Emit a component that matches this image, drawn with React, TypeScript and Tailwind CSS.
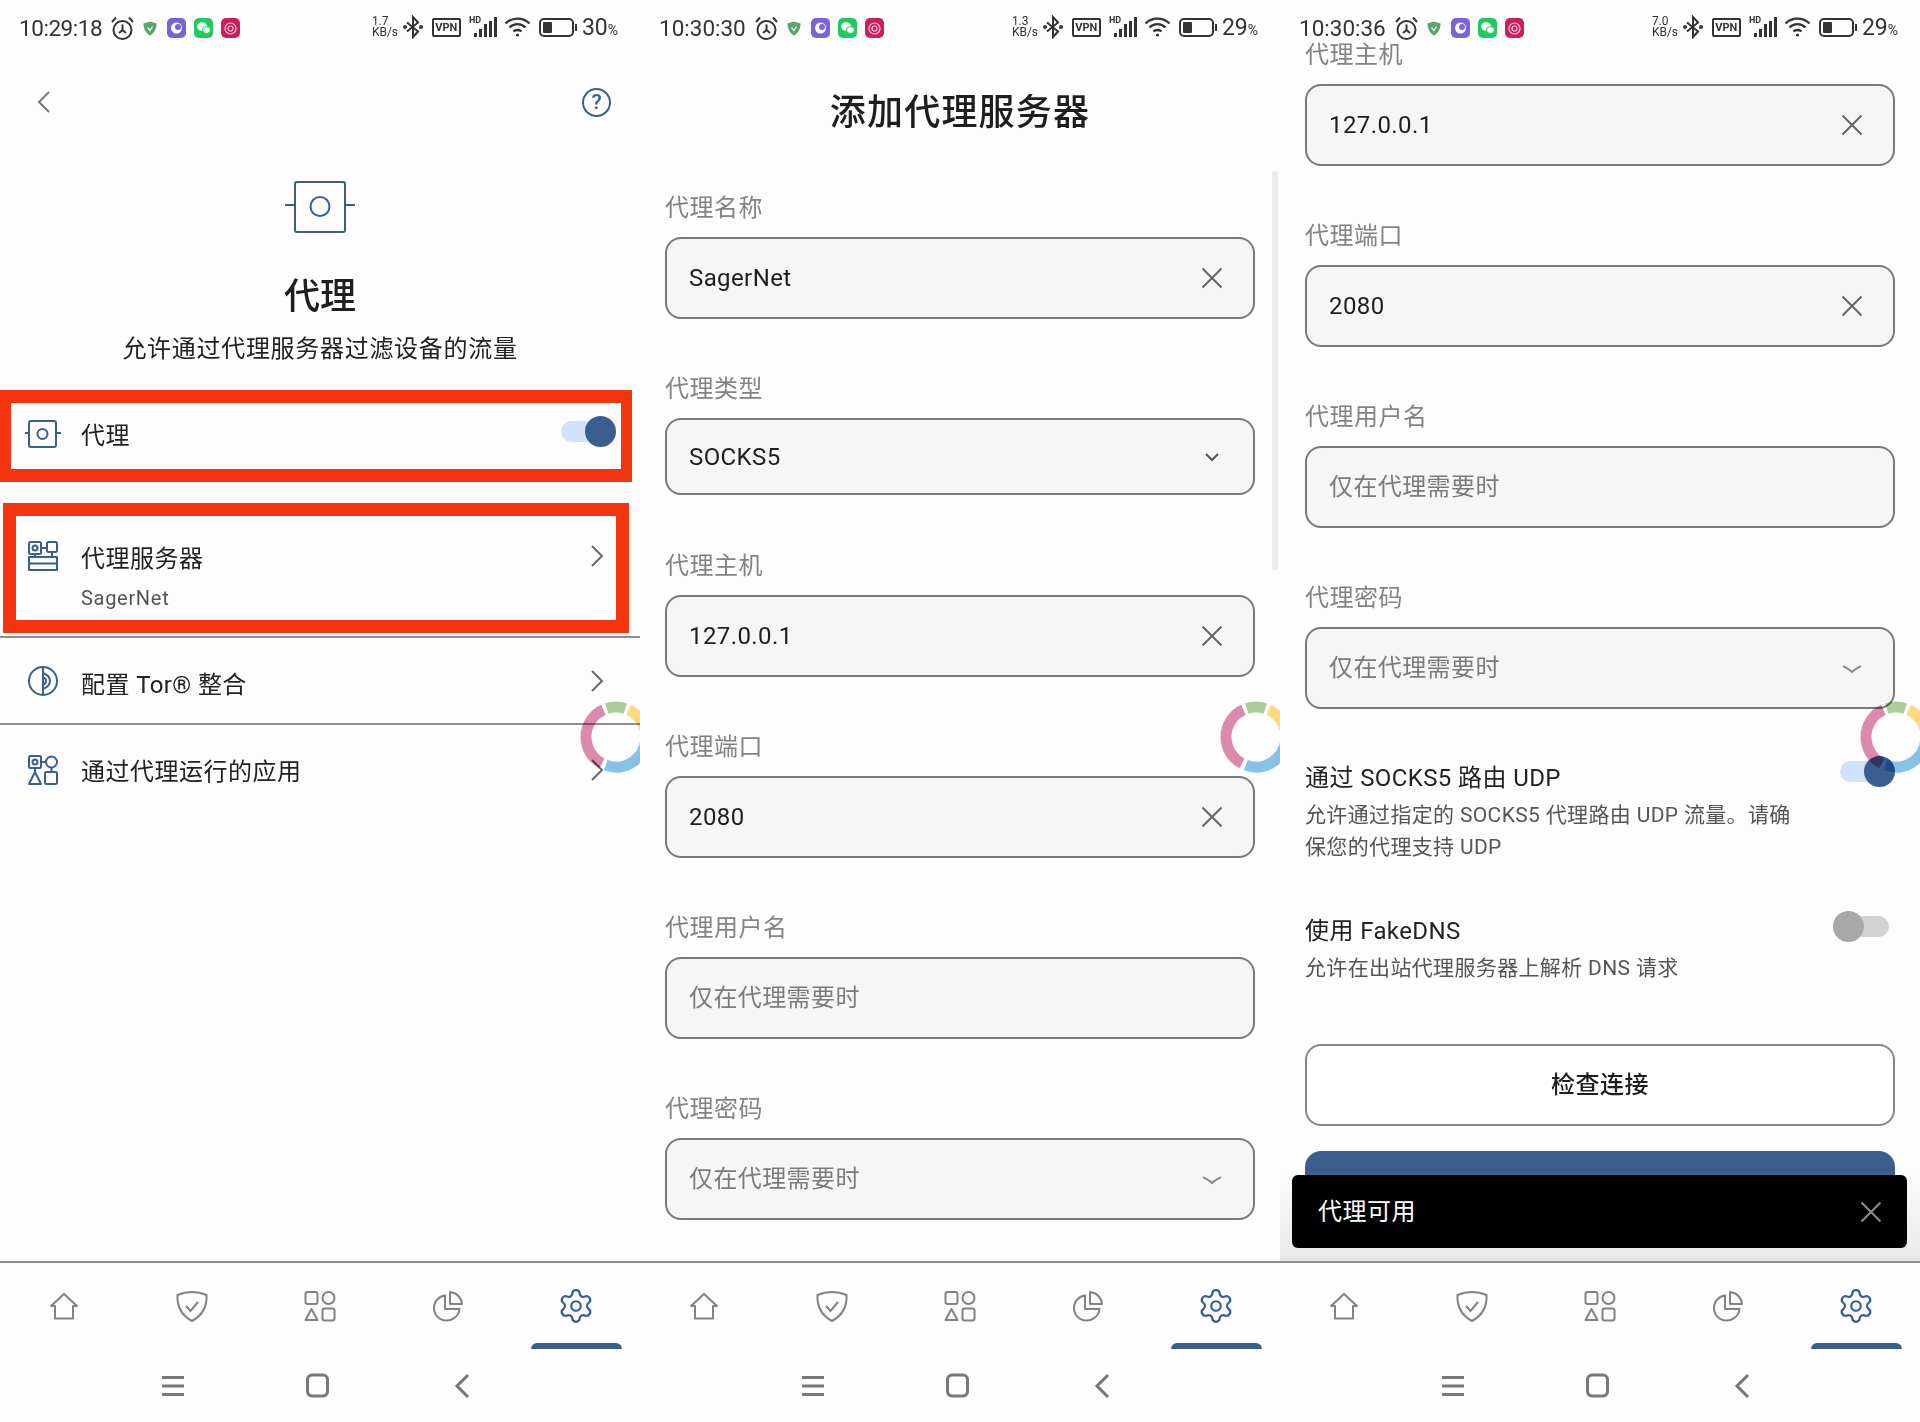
import { Settings } from 'lucide-react';

const BLUE = '#3a5f8f';

function arc(start: number, end: number, r = 30, c = 36) {
  const pt = (deg: number) => {
    const a = ((deg - 90) * Math.PI) / 180;
    return `${(c + r * Math.cos(a)).toFixed(2)} ${(c + r * Math.sin(a)).toFixed(2)}`;
  };
  return `M${pt(start)} A${r} ${r} 0 ${end - start > 180 ? 1 : 0} 1 ${pt(end)}`;
}

function Ring() {
  return (
    <svg className="absolute left-[580px] top-[701px] mix-blend-multiply" width="72" height="72" viewBox="0 0 72 72" fill="none" strokeWidth="11">
      <path d={arc(208, 335)} stroke="#e08aad" />
      <path d={arc(342, 378)} stroke="#aed09a" />
      <path d={arc(25, 85)} stroke="#fddc85" />
      <path d={arc(95, 200)} stroke="#87c4e8" />
    </svg>
  );
}

function StatusBar({ time, speed, percent, tight }: { time: string; speed: string; percent: string; tight?: boolean }) {
  return (
    <div className="flex h-[44px] items-end justify-between pb-[1px] pl-[19px] pr-[22px] text-[#333]">
      <div className="flex items-center">
        <span className={`text-[22.5px] leading-[30px] ${tight ? 'tracking-[-0.45px]' : ''}`}>{time}</span>
        <svg className="ml-[7px]" width="27" height="27" viewBox="0 0 27 27" fill="none" stroke="#333" strokeWidth="2">
          <circle cx="13.500" cy="15" r="9" />
          <path d="M13.500 9.500V15L10 18M13.500 15 17 18M3 7 7 2.500M24 7 20 2.500" />
        </svg>
        <svg className="ml-[7px]" width="14" height="15" viewBox="0 0 14 15">
          <path d="M7 0.5 13.5 2.5C13.5 8 11 12.5 7 14.5 3 12.5 .5 8 .5 2.5Z" fill="#58a66c" />
          <path d="M4.5 6.5 7 9.5 9.5 5.5" stroke="#fff" strokeWidth="1.3" fill="none" />
        </svg>
        <svg className="ml-[10px]" width="19" height="20" viewBox="0 0 19 20">
          <rect width="19" height="20" rx="5" fill="#7a63d6" />
          <circle cx="9.5" cy="10" r="5.5" fill="#fff" />
          <circle cx="11" cy="9" r="3" fill="#7a63d6" />
        </svg>
        <svg className="ml-[8px]" width="19" height="20" viewBox="0 0 19 20">
          <rect width="19" height="20" rx="5" fill="#1fc95f" />
          <ellipse cx="8" cy="8.500" rx="5" ry="4.2" fill="#fff" />
          <ellipse cx="12.5" cy="12" rx="4" ry="3.4" fill="#fff" stroke="#1fc95f" />
        </svg>
        <svg className="ml-[8px]" width="19" height="20" viewBox="0 0 19 20" fill="none">
          <rect width="19" height="20" rx="5" fill="#c8205f" />
          <circle cx="9.5" cy="10.500" r="5.5" stroke="#f5c6d8" strokeWidth="1.2" />
          <circle cx="9.5" cy="10.500" r="2.5" stroke="#f5c6d8" strokeWidth="1.2" />
        </svg>
      </div>
      <div className="flex items-center">
        <div className="flex w-[28px] flex-col text-[12px] leading-[11px]">
          <span>{speed}</span>
          <span>KB/s</span>
        </div>
        <svg className="ml-[3px]" width="20" height="24" viewBox="0 0 20 24" fill="none" stroke="#333" strokeWidth="2">
          <path d="M4 7.5 15 16.5 10 22V2L15 7.5 4 16.5" />
          <circle cx="2" cy="12" r="1" fill="#333" />
          <circle cx="18" cy="12" r="1" fill="#333" />
        </svg>
        <span className="ml-[9px] flex h-[19px] w-[29px] items-center justify-center rounded-[2px] border-2 border-[#333] text-[11px] font-bold leading-none">VPN</span>
        <div className="relative ml-[8px] h-[20px] w-[28px]">
          <span className="absolute left-0 top-[-2px] text-[9px] font-bold leading-[10px]">HD</span>
          <div className="absolute bottom-0 right-0 flex items-end gap-[2px]">
            <i className="h-[4px] w-[3px] bg-[#333]" />
            <i className="h-[8px] w-[3px] bg-[#333]" />
            <i className="h-[13px] w-[3px] bg-[#333]" />
            <i className="h-[16px] w-[3px] bg-[#333]" />
            <i className="h-[20px] w-[3px] bg-[#333]" />
          </div>
        </div>
        <svg className="ml-[7px]" width="27" height="22" viewBox="0 0 27 22" fill="none" stroke="#333" strokeWidth="2.4">
          <path d="M1.5 7.5C8 1 19 1 25.5 7.5M5.5 11.5C10 7 17 7 21.5 11.5M9.5 15.5C11.5 13.5 15.5 13.5 17.5 15.5" />
          <circle cx="13.5" cy="19" r="1.6" fill="#333" stroke="none" />
        </svg>
        <div className="ml-[8px] flex items-center">
          <div className="h-[19px] w-[35px] rounded-[5px] border-2 border-[#333] p-[2px]">
            <div className="h-full w-[9px] rounded-[1px] bg-[#333]" />
          </div>
          <i className="ml-[1px] h-[7px] w-[2px] bg-[#333]" />
        </div>
        <span className="ml-[5px] mt-[4px] flex items-baseline text-[23px] leading-[26px]">
          {percent}
          <span className="text-[14px]">%</span>
        </span>
      </div>
    </div>
  );
}

function BottomNav() {
  const gray = { fill: 'none', stroke: '#828282', strokeWidth: 2 };
  return (
    <div className="shrink-0 border-t-2 border-[#8f8f8f]">
      <div className="grid h-[86px] grid-cols-5">
        <div className="flex h-[80px] items-center justify-center pt-[6px]">
          <svg width="30" height="28" viewBox="0 0 30 28" {...gray} strokeLinejoin="round">
            <path d="M15 2 28 14H24V26.5H6V14H2Z" />
          </svg>
        </div>
        <div className="flex h-[80px] items-center justify-center pt-[6px]">
          <svg width="32" height="32" viewBox="0 0 32 32" {...gray}>
            <path d="M16 2C21 2 26 3 30.500 5 31 15 27 25 16 31 5 25 1 15 1.500 5 6 3 11 2 16 2Z" />
            <path d="M10 16 14.500 21 22 12" />
          </svg>
        </div>
        <div className="flex h-[80px] items-center justify-center pt-[6px]">
          <svg width="32" height="32" viewBox="0 0 32 32" {...gray} strokeLinejoin="round">
            <rect x="1.500" y="2" width="12" height="12" rx="2" />
            <ellipse cx="24.500" cy="8" rx="6" ry="6" />
            <path d="M7.500 19 13.500 30H1.500Z" />
            <rect x="18.500" y="18.500" width="12" height="12" rx="2" />
          </svg>
        </div>
        <div className="flex h-[80px] items-center justify-center pt-[6px]">
          <svg width="32" height="32" viewBox="0 0 32 32" {...gray} strokeLinejoin="round">
            <path d="M13 5.500C6.500 6.500 2 11.500 2 18 2 25 7.500 30.500 14.500 30.500 21 30.500 27 25.500 27.500 19H13Z" />
            <path d="M18 2C24.500 2.500 29.500 7.500 30 14H18Z" />
          </svg>
        </div>
        <div className="flex flex-col items-center">
          <div className="flex h-[80px] items-center justify-center pt-[6px]">
            <Settings size={38} color={BLUE} strokeWidth={1.4} />
          </div>
          <div className="h-[6px] w-[91px] rounded-t-[6px] bg-[#3a5f8f]" />
        </div>
      </div>
      <div className="flex h-[73px] items-center gap-[115px] pl-[158px]">
        <svg width="30" height="24" viewBox="0 0 30 24" fill="none" stroke="#777" strokeWidth="3">
          <path d="M4 3.500H26M4 12H26M4 20.500H26" />
        </svg>
        <svg width="30" height="26" viewBox="0 0 30 26" fill="none" stroke="#777" strokeWidth="3">
          <rect x="4.500" y="2" width="20" height="21" rx="4.500" />
        </svg>
        <svg width="30" height="26" viewBox="0 0 30 26" fill="none" stroke="#777" strokeWidth="3">
          <path d="M20 2 9 13 20 24" />
        </svg>
      </div>
    </div>
  );
}

function Clear({ color = '#666' }: { color?: string }) {
  return (
    <svg width="22" height="22" viewBox="0 0 22 22" fill="none" stroke={color} strokeWidth="2">
      <path d="M1.500 1.500 20.500 20.500M20.500 1.500 1.500 20.500" />
    </svg>
  );
}

function Field({
  label,
  value,
  placeholder,
  select,
  blurred,
}: {
  label: string;
  value?: string;
  placeholder?: string;
  select?: boolean;
  blurred?: boolean;
}) {
  const short = select && !blurred;
  return (
    <div className={short ? 'mb-[53px]' : 'mb-[52px]'}>
      <div className="mb-[13px] h-[34px] text-[24px] leading-[37px] tracking-[0.5px] text-[#838383]">{label}</div>
      <div
        className={`flex items-center justify-between rounded-[16px] border-2 border-[#77797c] bg-[#f6f6f6] pl-[22px] pr-[30px] text-[24px] tracking-[0.4px] ${
          short ? 'h-[77px]' : 'h-[82px]'
        }`}
      >
        {value ? <span className="text-[#1d1d1d]">{value}</span> : null}
        {placeholder ? <span className="text-[#7b7b7b]">{placeholder}</span> : null}
        {select ? (
          <svg width="22" height="22" viewBox="0 0 22 22" fill="none" stroke={blurred ? '#888' : '#555'} strokeWidth="2">
            {blurred ? <path d="M2 9C7 12 9 13 11 15 13 13 15 12 20 9" /> : <path d="M5 8 11 14 17 8" />}
          </svg>
        ) : null}
        {value && !select ? <Clear /> : null}
      </div>
    </div>
  );
}

function Toggle({ on, className }: { on: boolean; className: string }) {
  return (
    <div className={`relative h-[31px] shrink-0 ${on ? 'w-[55px]' : 'w-[56px]'} ${className}`}>
      <div className={`absolute top-[5px] h-[21px] rounded-full ${on ? 'left-0 w-[46px] bg-[#cfe1fb]' : 'right-0 w-[46px] bg-[#d2d2d2]'}`} />
      <div className={`absolute top-0 h-[31px] w-[31px] rounded-full ${on ? 'right-0 bg-[#3a5f8f]' : 'left-0 bg-[#a8a8a8]'}`} />
    </div>
  );
}

function Chevron() {
  return (
    <svg width="16" height="24" viewBox="0 0 16 24" fill="none" stroke="#6a6a6a" strokeWidth="2">
      <path d="M3 2 13 12 3 22" />
    </svg>
  );
}

function ProxyPanel() {
  const stroke = { fill: 'none', stroke: BLUE, strokeWidth: 2 };
  return (
    <section className="relative flex h-[1422px] w-[640px] shrink-0 flex-col overflow-hidden bg-[#fdfdfe]">
      <StatusBar time="10:29:18" speed="1.7" percent="30" tight />
      <main className="min-h-0 flex-1 overflow-hidden">
        <div className="mt-[38px] flex h-[40px] items-center justify-between pl-[36px] pr-[29px]">
          <svg width="16" height="24" viewBox="0 0 16 24" fill="none" stroke="#777" strokeWidth="2">
            <path d="M13 2 3 12 13 22" />
          </svg>
          <div className="flex h-[29px] w-[29px] items-center justify-center rounded-full border-2 border-[#3a5f8f] text-[21px] font-medium leading-none text-[#3a5f8f]">?</div>
        </div>
        <div className="mt-[59px] flex justify-center">
          <svg width="72" height="52" viewBox="0 0 72 52" {...stroke}>
            <rect x="11" y="1" width="50" height="50" rx="2" />
            <circle cx="36" cy="25.500" r="9.500" />
            <path d="M1 24H11M61 24H71" />
          </svg>
        </div>
        <h1 className="mt-[42px] text-center text-[36px] font-medium leading-[44px] text-[#1e1e1e]">代理</h1>
        <p className="mt-[13px] text-center text-[24px] leading-[34px] tracking-[0.7px] text-[#222]">允许通过代理服务器过滤设备的流量</p>

        <div className="mt-[24px] flex h-[92px] w-[632px] items-center border-x-[11px] border-y-[13px] border-[#f5350f] pl-[14px] text-[24px] tracking-[0.5px] text-[#222]">
          <svg className="mb-[4px]" width="36" height="28" viewBox="0 0 36 28" {...stroke}>
            <rect x="4" y="1" width="27" height="26" rx="2" />
            <circle cx="17.500" cy="14" r="5" />
            <path d="M0 13H4M31 13H36" />
          </svg>
          <span className="ml-[20px] flex-1">代理</span>
          <Toggle on className="mb-[9px] mr-[5px]" />
        </div>

        <div className="ml-[3px] mt-[21px] flex h-[130px] w-[626px] items-center border-x-[13px] border-y-[13px] border-[#f5350f] pl-[12px] pr-[11px]">
          <svg className="mb-[24px] shrink-0" width="30" height="30" viewBox="0 0 30 30" {...stroke}>
            <rect x="1" y="1" width="12" height="12" rx="1.500" />
            <circle cx="7" cy="7" r="2.500" />
            <rect x="19" y="1" width="10" height="10" rx="1.500" />
            <path d="M13 7H19M24 11V16H1V29H29V16H24M1 22.500H29" strokeLinejoin="round" />
            <path d="M7 13V16" />
          </svg>
          <div className="ml-[23px] mt-[16px] flex-1">
            <div className="text-[24px] leading-[34px] tracking-[0.5px] text-[#222]">代理服务器</div>
            <div className="mt-[9px] text-[20px] leading-[26px] tracking-[0.7px] text-[#555]">SagerNet</div>
          </div>
          <div className="mb-[24px]">
            <Chevron />
          </div>
        </div>

        <div className="mt-[3px] flex h-[89px] items-center border-y-2 border-[#8f8f8f] pl-[28px] pr-[35px]">
          <svg width="30" height="30" viewBox="0 0 30 30" {...stroke}>
            <circle cx="15" cy="15" r="14" />
            <path d="M15 1V29M15 7C20 9 22 12 22 15 22 18 20 21 15 23M15 11.500C17.500 12 18 14 18 15 18 16 17.500 18 15 18.500" />
          </svg>
          <span className="ml-[23px] mt-[8px] flex-1 text-[24px] tracking-[0.4px] text-[#222]">配置 Tor® 整合</span>
          <Chevron />
        </div>

        <div className="flex h-[90px] items-center pl-[28px] pr-[35px]">
          <svg width="30" height="30" viewBox="0 0 30 30" {...stroke} strokeLinejoin="round">
            <rect x="1" y="1" width="12" height="12" rx="1.500" />
            <circle cx="7" cy="7" r="2.500" />
            <circle cx="23.500" cy="7" r="5.500" />
            <path d="M13 7H18M7 17 13 29H1ZM7 13V17M23.500 12.500V17" />
            <rect x="17" y="17" width="12" height="12" rx="1.500" />
          </svg>
          <span className="ml-[23px] mt-[3px] flex-1 text-[24px] tracking-[0.5px] text-[#222]">通过代理运行的应用</span>
          <Chevron />
        </div>
      </main>
      <BottomNav />
      <Ring />
    </section>
  );
}

function AddPanel() {
  return (
    <section className="relative flex h-[1422px] w-[640px] shrink-0 flex-col overflow-hidden bg-[#fdfdfe]">
      <StatusBar time="10:30:30" speed="1.3" percent="29" />
      <main className="min-h-0 flex-1 overflow-hidden px-[25px]">
        <h1 className="mt-[47px] text-center text-[36px] font-medium leading-[44px] tracking-[1.2px] text-[#1e1e1e]">添加代理服务器</h1>
        <div className="mt-[55px]">
          <Field label="代理名称" value="SagerNet" />
          <Field label="代理类型" value="SOCKS5" select />
          <Field label="代理主机" value="127.0.0.1" />
          <Field label="代理端口" value="2080" />
          <Field label="代理用户名" placeholder="仅在代理需要时" />
          <Field label="代理密码" placeholder="仅在代理需要时" select blurred />
        </div>
      </main>
      <BottomNav />
      <div className="absolute left-[632px] top-[171px] h-[399px] w-[6px] rounded-full bg-[#ececec]" />
      <Ring />
    </section>
  );
}

function CheckPanel() {
  return (
    <section className="relative flex h-[1422px] w-[640px] shrink-0 flex-col overflow-hidden bg-[#fdfdfe]">
      <div className="relative z-10 mb-[-7px]">
        <StatusBar time="10:30:36" speed="7.0" percent="29" />
      </div>
      <main className="relative min-h-0 flex-1 overflow-hidden">
        <div className="px-[25px]">
          <Field label="代理主机" value="127.0.0.1" />
          <Field label="代理端口" value="2080" />
          <Field label="代理用户名" placeholder="仅在代理需要时" />
          <Field label="代理密码" placeholder="仅在代理需要时" select blurred />

          <div className="mt-[6px] flex items-start justify-between">
            <div>
              <div className="text-[24px] leading-[34px] tracking-[0.4px] text-[#222]">通过 SOCKS5 路由 UDP</div>
              <p className="mt-[4px] w-[490px] text-[21px] leading-[32px] tracking-[0.35px] text-[#555]">
                允许通过指定的 SOCKS5 代理路由 UDP 流量。请确保您的代理支持 UDP
              </p>
            </div>
            <Toggle on className="mt-[-5px]" />
          </div>

          <div className="mt-[51px] flex items-start justify-between">
            <div>
              <div className="text-[24px] leading-[34px] tracking-[0.4px] text-[#222]">使用 FakeDNS</div>
              <p className="mt-[5px] text-[21px] leading-[31px] tracking-[0.35px] text-[#555]">允许在出站代理服务器上解析 DNS 请求</p>
            </div>
            <Toggle on={false} className="mr-[6px] mt-[-3px]" />
          </div>

          <div className="mt-[60px] flex h-[82px] items-center justify-center rounded-[16px] border-2 border-[#85878c] bg-white text-[24px] font-medium tracking-[0.5px] text-[#1e1e1e]">
            检查连接
          </div>
          <div className="mt-[25px] h-[82px] rounded-[16px] bg-[#3a5f8f]" />
        </div>
        <div className="absolute inset-x-0 bottom-0 h-[90px] bg-gradient-to-b from-transparent to-[#e8e8ea]" />
        <div className="absolute bottom-[13px] left-[12px] flex h-[73px] w-[615px] items-center justify-between rounded-[6px] bg-black pl-[26px] pr-[25px] text-[24px] tracking-[0.5px] text-white">
          <span>代理可用</span>
          <Clear color="#8c8c8c" />
        </div>
      </main>
      <BottomNav />
      <Ring />
    </section>
  );
}

export default function App() {
  return (
    <div className="flex h-[1422px] w-[1920px] overflow-hidden bg-[#fdfdfe] font-['Roboto','Noto_Sans_CJK_SC',sans-serif]">
      <ProxyPanel />
      <AddPanel />
      <CheckPanel />
    </div>
  );
}
